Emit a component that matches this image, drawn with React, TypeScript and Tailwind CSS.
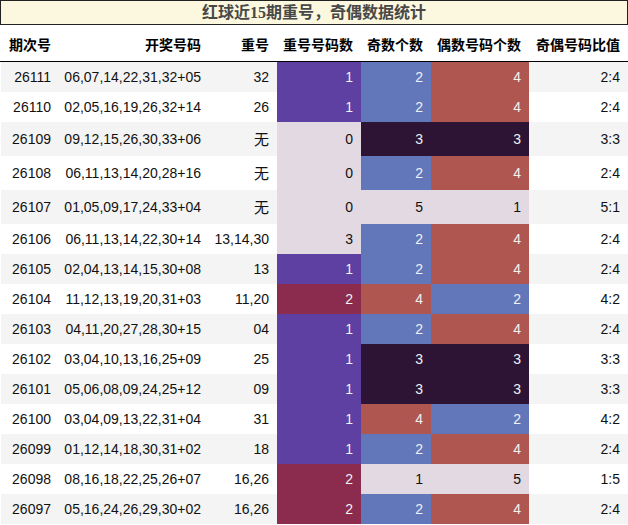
const ROWS: [string, string, string, number, number, number, string][] = [
  ['26111', '06,07,14,22,31,32+05', '32', 1, 2, 4, '2:4'],
  ['26110', '02,05,16,19,26,32+14', '26', 1, 2, 4, '2:4'],
  ['26109', '09,12,15,26,30,33+06', '无', 0, 3, 3, '3:3'],
  ['26108', '06,11,13,14,20,28+16', '无', 0, 2, 4, '2:4'],
  ['26107', '01,05,09,17,24,33+04', '无', 0, 5, 1, '5:1'],
  ['26106', '06,11,13,14,22,30+14', '13,14,30', 3, 2, 4, '2:4'],
  ['26105', '02,04,13,14,15,30+08', '13', 1, 2, 4, '2:4'],
  ['26104', '11,12,13,19,20,31+03', '11,20', 2, 4, 2, '4:2'],
  ['26103', '04,11,20,27,28,30+15', '04', 1, 2, 4, '2:4'],
  ['26102', '03,04,10,13,16,25+09', '25', 1, 3, 3, '3:3'],
  ['26101', '05,06,08,09,24,25+12', '09', 1, 3, 3, '3:3'],
  ['26100', '03,04,09,13,22,31+04', '31', 1, 4, 2, '4:2'],
  ['26099', '01,12,14,18,30,31+02', '18', 1, 2, 4, '2:4'],
  ['26098', '08,16,18,22,25,26+07', '16,26', 2, 1, 5, '1:5'],
  ['26097', '05,16,24,26,29,30+02', '16,26', 2, 2, 4, '2:4']
]

const LIGHT = 'bg-[#e2d9e2] text-[#111]'

// 重号号码数 colours
const REPEAT_CELL: Record<number, string> = {
  0: LIGHT,
  1: 'bg-[#5e40a3] text-[#f1f1f1]',
  2: 'bg-[#8b2b4e] text-[#f1f1f1]',
  3: LIGHT
}

// 奇数 / 偶数 count colours
const COUNT_CELL: Record<number, string> = {
  1: LIGHT,
  2: 'bg-[#6277b9] text-[#f1f1f1]',
  3: 'bg-[#2e1434] text-[#f1f1f1]',
  4: 'bg-[#b05651] text-[#f1f1f1]',
  5: LIGHT
}

const HEADERS = [
  { label: '期次号', w: 'w-[59px]' },
  { label: '开奖号码', w: 'w-[150px]' },
  { label: '重号', w: 'w-[68px]' },
  { label: '重号号码数', w: 'w-[84px]' },
  { label: '奇数个数', w: 'w-[70px]' },
  { label: '偶数号码个数', w: 'w-[98px]' },
  { label: '奇偶号码比值', w: 'w-[99px]' }
]

export default function App() {
  return (
    <div className="w-[628px] h-[525px] overflow-hidden bg-white font-['Liberation_Sans','Noto_Sans_CJK_SC',sans-serif]">
      <div className="h-[25px] border border-[#222] bg-[#fbf8df] flex items-center justify-center">
        <span className="text-[16px] font-bold text-[#484848] leading-none font-['Liberation_Serif','Noto_Sans_CJK_SC',serif]">
          红球近15期重号，奇偶数据统计
        </span>
      </div>

      <div className="flex h-[37px] items-center border-b border-black pt-[2px]">
        {HEADERS.map(h => (
          <div
            key={h.label}
            className={`${h.w} shrink-0 pr-2 text-right text-[14px] font-bold text-black font-['Noto_Sans_CJK_SC',sans-serif]`}
          >
            {h.label}
          </div>
        ))}
      </div>

      <div className="flex flex-col pl-px">
        {ROWS.map((r, i) => {
          const tall = r[2] === '无'
          return (
            <div
              key={r[0]}
              className={`flex text-[14px] text-[#111] ${tall ? 'h-[34px]' : 'h-[30px]'} ${i % 2 === 0 ? 'bg-[#f4f4f4]' : 'bg-white'}`}
            >
              <div className="w-[58px] shrink-0 pr-2 flex items-center justify-end">{r[0]}</div>
              <div className="w-[150px] shrink-0 pr-2 flex items-center justify-end">{r[1]}</div>
              <div className="w-[68px] shrink-0 pr-2 flex items-center justify-end">
                {tall ? <span className="font-['Noto_Sans_CJK_SC',sans-serif] text-[15px]">无</span> : r[2]}
              </div>
              <div className={`w-[84px] shrink-0 pr-2 flex items-center justify-end ${REPEAT_CELL[r[3]]}`}>{r[3]}</div>
              <div className={`w-[70px] shrink-0 pr-2 flex items-center justify-end ${COUNT_CELL[r[4]]}`}>{r[4]}</div>
              <div className={`w-[98px] shrink-0 pr-2 flex items-center justify-end ${COUNT_CELL[r[5]]}`}>{r[5]}</div>
              <div className="w-[99px] shrink-0 pr-2 flex items-center justify-end">{r[6]}</div>
            </div>
          )
        })}
      </div>
    </div>
  )
}
